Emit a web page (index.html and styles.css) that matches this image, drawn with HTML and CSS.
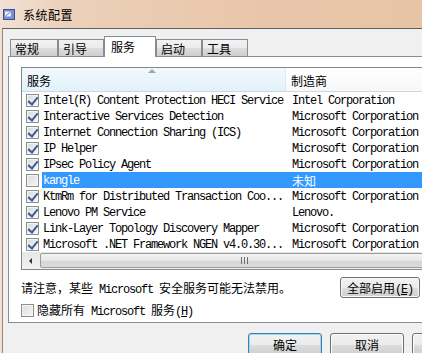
FILE: index.html
```html
<!DOCTYPE html>
<html lang="zh-CN">
<head>
    <meta charset="UTF-8">
    <title>系统配置</title>
    <link rel="stylesheet" href="styles.css">
</head>
<body>
    <div class="window">
        <div class="titlebar">
            <svg class="app-icon" viewBox="0 0 12 11" width="12" height="11">
                <rect x="0.5" y="0.5" width="11" height="10" fill="#7b8fd0" stroke="#3f4f8f"/>
                <rect x="2" y="2.5" width="6" height="5" fill="#e9eefb"/>
                <path d="M2 7.5 L8 2.5" stroke="#6f82c4" stroke-width="1"/>
            </svg>
            <span class="title">系统配置</span>
        </div>
        <div class="client">
            <div class="tabs">
                <div class="tab first">常规</div>
                <div class="tab">引导</div>
                <div class="tab active">服务</div>
                <div class="tab">启动</div>
                <div class="tab">工具</div>
            </div>
            <div class="panel">
                <div class="listview">
                    <div class="lv-header">
                        <div class="col col-name sorted">服务<span class="sort-arrow"></span></div>
                        <div class="col col-maker">制造商</div>
                    </div>
                    <div class="lv-body">
                        <div class="row"><span class="check on"></span><span class="sel"><span class="name">Intel(R) Content Protection HECI Service</span><span class="maker">Intel Corporation</span></span></div>
                        <div class="row"><span class="check on"></span><span class="sel"><span class="name">Interactive Services Detection</span><span class="maker">Microsoft Corporation</span></span></div>
                        <div class="row"><span class="check on"></span><span class="sel"><span class="name">Internet Connection Sharing (ICS)</span><span class="maker">Microsoft Corporation</span></span></div>
                        <div class="row"><span class="check on"></span><span class="sel"><span class="name">IP Helper</span><span class="maker">Microsoft Corporation</span></span></div>
                        <div class="row"><span class="check on"></span><span class="sel"><span class="name">IPsec Policy Agent</span><span class="maker">Microsoft Corporation</span></span></div>
                        <div class="row selected"><span class="check"></span><span class="sel"><span class="name">kangle</span><span class="maker cjk">未知</span></span></div>
                        <div class="row"><span class="check on"></span><span class="sel"><span class="name">KtmRm for Distributed Transaction Coo...</span><span class="maker">Microsoft Corporation</span></span></div>
                        <div class="row"><span class="check on"></span><span class="sel"><span class="name">Lenovo PM Service</span><span class="maker">Lenovo.</span></span></div>
                        <div class="row"><span class="check on"></span><span class="sel"><span class="name">Link-Layer Topology Discovery Mapper</span><span class="maker">Microsoft Corporation</span></span></div>
                        <div class="row"><span class="check on"></span><span class="sel"><span class="name">Microsoft .NET Framework NGEN v4.0.30...</span><span class="maker">Microsoft Corporation</span></span></div>
                    </div>
                    <div class="hscroll">
                        <div class="sb-arrow"><span class="tri-left"></span></div>
                        <div class="sb-thumb"><span class="grip"></span></div>
                    </div>
                </div>
                <div class="note-row">
                    <span class="note">请注意，某些<span class="mono"> Microsoft </span>安全服务可能无法禁用。</span>
                    <button class="btn wide">全部启用<span class="mono">(<u>E</u>)</span></button>
                </div>
                <div class="hide-row">
                    <span class="check"></span>
                    <span>隐藏所有<span class="mono"> Microsoft </span>服务<span class="mono">(<u>H</u>)</span></span>
                </div>
            </div>
            <div class="buttons">
                <button class="btn default">确定</button>
                <button class="btn">取消</button>
                <button class="btn">应用<span class="mono">(<u>A</u>)</span></button>
                <button class="btn">帮助</button>
            </div>
        </div>
    </div>
</body>
</html>
```

FILE: styles.css
```css
* {
    box-sizing: border-box;
}
body {
    margin: 0;
    width: 422px;
    height: 353px;
    overflow: hidden;
    background: #f0f0f0;
    font-family: "Noto Sans CJK SC", sans-serif;
    font-size: 12px;
    color: #000;
}
.window {
    width: 580px;
    height: 400px;
    background: linear-gradient(to right, #f1e1d4 0%, #ecd0b9 12%, #e9c6a9 45%, #e7c3a5 100%);
}
.titlebar {
    height: 28px;
    display: flex;
    align-items: center;
    padding-left: 3px;
    padding-top: 1px;
}
.app-icon {
    margin-right: 8px;
}
.title {
    font-size: 12px;
    letter-spacing: 0.5px;
}
.client {
    margin-left: 2px;
    width: 575px;
    height: 372px;
    border-left: 1px solid #9c8573;
    border-top: 1px solid #5e5e5e;
    background: #f0f0f0;
    padding: 0 9px 0 5px;
}
.mono {
    font-family: "Liberation Mono", monospace;
    letter-spacing: -1.2px;
}
u {
    text-decoration: underline;
}

/* tabs */
.tabs {
    display: flex;
    align-items: flex-end;
    height: 20px;
    margin-top: 7px;
    padding-left: 2px;
    position: relative;
    z-index: 1;
}
.tab {
    width: 46px;
    height: 17px;
    padding-left: 4px;
    line-height: 17px;
    border: 1px solid #898c95;
    border-bottom: none;
    background: linear-gradient(#f2f2f2, #ebebeb 50%, #dddddd 51%, #cfcfcf);
}
.tab.first {
    width: 48px;
}
.tab.active {
    width: 52px;
    height: 21px;
    margin-bottom: -1px;
    padding-left: 6px;
    line-height: 19px;
    background: #fff;
}

/* panel */
.panel {
    border: 1px solid #898c95;
    background: #fff;
    padding: 10px 12px 4px 12px;
    height: 267px;
}
.listview {
    border: 1px solid #828790;
    background: #fff;
}
.lv-header {
    display: flex;
    height: 24px;
    border-bottom: 1px solid #d5d5d5;
    background: linear-gradient(#ffffff, #f7f8f9);
}
.col {
    padding: 4px 0 0 5px;
    line-height: 18px;
}
.col-name {
    width: 264px;
    border-right: 1px solid #e3e8ee;
    position: relative;
}
.col-name.sorted {
    background: linear-gradient(#f2f9fd, #e1f1fa);
}
.sort-arrow {
    position: absolute;
    left: 126px;
    top: 1px;
    width: 0;
    height: 0;
    border-left: 4px solid transparent;
    border-right: 4px solid transparent;
    border-bottom: 4px solid #9aa6b4;
}
.lv-body {
    font-family: "Liberation Mono", "Noto Sans CJK SC", monospace;
    letter-spacing: -1.2px;
}
.row {
    display: flex;
    align-items: center;
    height: 16px;
    padding-left: 4px;
}
.sel {
    display: flex;
    flex: 1;
    height: 16px;
    line-height: 16px;
    padding-top: 1px;
    margin-left: 3px;
    white-space: pre;
}
.name {
    width: 244px;
    padding-left: 1px;
}
.maker {
    padding-left: 6px;
}
.maker.cjk {
    font-family: "Noto Sans CJK SC", sans-serif;
    letter-spacing: 0;
    line-height: 15px;
}
.row.selected .sel {
    background: #3399ff;
    color: #fff;
}

/* checkboxes */
.check {
    width: 13px;
    height: 13px;
    flex: none;
    border: 1px solid #8e8f8f;
    background: linear-gradient(135deg, #dcdcdc, #f6f6f6);
    box-shadow: inset 0 0 0 1px #f4f4f4;
    position: relative;
}
.check.on::after {
    content: "";
    position: absolute;
    left: 3px;
    top: 0px;
    width: 4px;
    height: 8px;
    border-right: 2px solid #3b5a9a;
    border-bottom: 2px solid #3b5a9a;
    transform: rotate(40deg);
}

/* scrollbar */
.hscroll {
    display: flex;
    height: 17px;
    background: linear-gradient(#e6e6e6, #f2f2f2);
}
.sb-arrow {
    width: 17px;
    display: flex;
    align-items: center;
    justify-content: center;
}
.tri-left {
    width: 0;
    height: 0;
    border-top: 3px solid transparent;
    border-bottom: 3px solid transparent;
    border-right: 3px solid #333;
}
.sb-thumb {
    width: 408px;
    margin: 1px 0 1px 1px;
    border: 1px solid #9b9b9b;
    border-radius: 2px;
    background: linear-gradient(#f4f4f4, #e6e6e6 50%, #d6d6d6 51%, #dadada);
    display: flex;
    align-items: center;
    justify-content: center;
}
.grip {
    width: 7px;
    height: 7px;
    background: linear-gradient(to right, #6e6e6e 1px, transparent 1px, transparent 3px, #6e6e6e 3px, #6e6e6e 4px, transparent 4px, transparent 6px, #6e6e6e 6px);
}

/* bottom of panel */
.note-row {
    display: flex;
    align-items: center;
    gap: 7px;
    margin-top: 7px;
    height: 21px;
}
.note {
    width: 312px;
}
.btn {
    font-family: "Noto Sans CJK SC", sans-serif;
    font-size: 12px;
    color: #000;
    height: 21px;
    width: 74px;
    padding: 0;
    border: 1px solid #707070;
    border-radius: 3px;
    background: linear-gradient(#f2f2f2, #ebebeb 50%, #dddddd 51%, #cfcfcf);
    box-shadow: inset 0 0 0 1px #fbfbfb;
}
.btn.wide {
    width: 80px;
}
.hide-row {
    display: flex;
    align-items: center;
    gap: 3px;
    margin-top: 5px;
    height: 14px;
}
.buttons {
    display: flex;
    justify-content: flex-end;
    gap: 8px;
    margin-top: 10px;
}
.buttons .btn {
    height: 23px;
}
.btn.default {
    border-color: #3c7fb1;
    box-shadow: inset 0 0 0 1px #9fd4f3;
}
```
